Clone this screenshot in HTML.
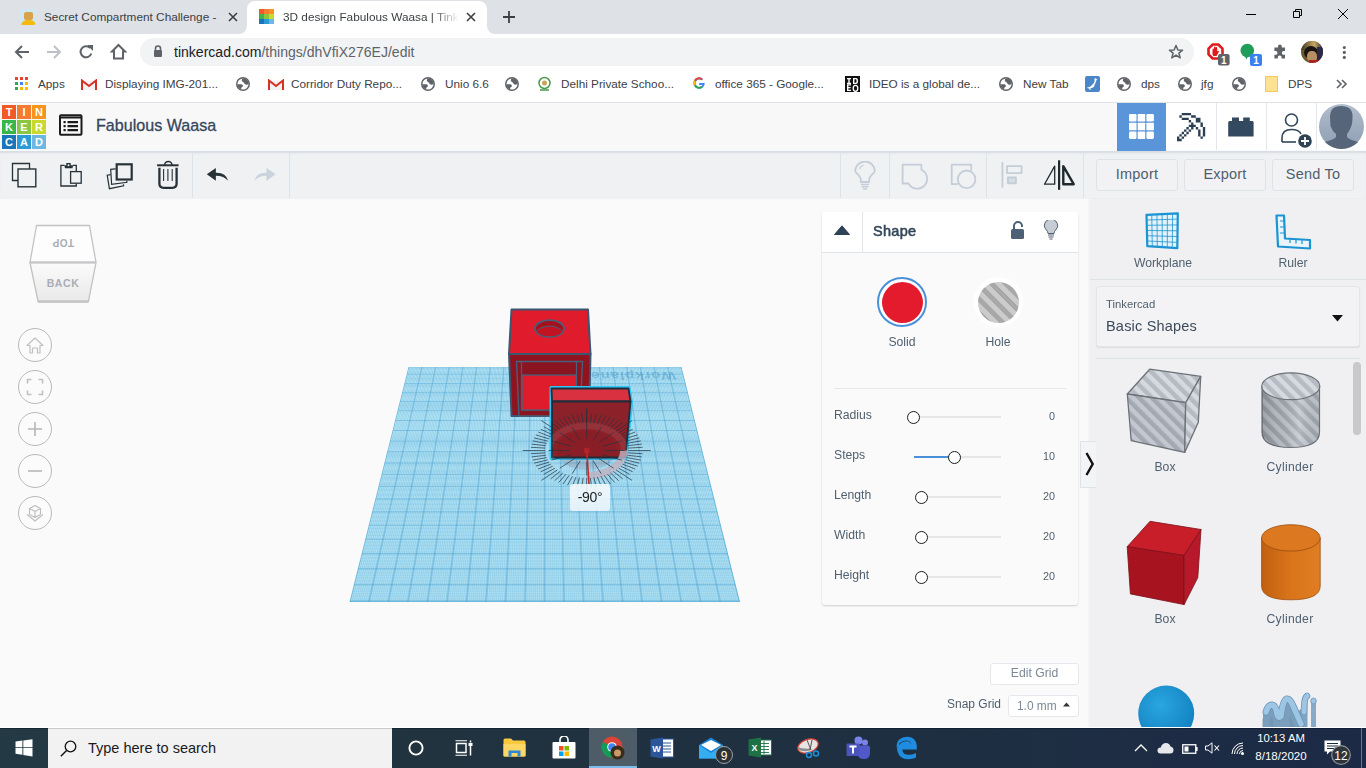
<!DOCTYPE html>
<html><head><meta charset="utf-8">
<style>
*{box-sizing:border-box;margin:0;padding:0}
html,body{width:1366px;height:768px;overflow:hidden;background:#fafafa;font-family:"Liberation Sans",sans-serif;position:relative}
.a{position:absolute}
i{display:block;font-style:normal}
#tabs{left:0;top:0;width:1366px;height:34px;background:#dee1e6}
#tb{left:0;top:34px;width:1366px;height:33px;background:#fff}
#bm{left:0;top:67px;width:1366px;height:35px;background:#fff}
.t{white-space:nowrap}
.bmt{top:77px;font-size:11.75px;color:#3c4043}


.btn{border:1px solid #dfe3e8;border-radius:3px;background:#f2f2f4;color:#4f5e6e;font-size:14.5px;line-height:29px;text-align:center;letter-spacing:0.2px}


.nv{left:18px;width:34px;height:34px;border:1px solid #b9b9b9;border-radius:50%;background:#fbfbfb}


.lbl{font-size:12.2px;color:#50606f}
.val{font-size:10.8px;color:#50606f;width:50px;text-align:right}
.trk{height:2px;background:#e6e6e6}
.thm{width:13px;height:13px;border-radius:50%;border:1.5px solid #1a1a1a;background:#fff}
</style></head><body>
<!-- TAB STRIP -->
<div id="tabs" class="a"></div>
<div class="a" style="left:239px;top:25px;width:256px;height:9px;background:#fff"></div>
<div class="a" style="left:231px;top:0;width:16px;height:34px;background:#dee1e6;border-radius:0 0 8px 0"></div>
<div class="a" style="left:487px;top:0;width:16px;height:34px;background:#dee1e6;border-radius:0 0 0 8px"></div>
<div class="a" style="left:247px;top:1px;width:240px;height:34px;background:#fff;border-radius:8px 8px 0 0"></div>
<!-- tab1 favicon -->
<div class="a" style="left:20px;top:9px;width:16px;height:16px;background:#cfe8f3;border-radius:3px;overflow:hidden">
  <div class="a" style="left:4px;top:3px;width:9px;height:8px;background:#d9a24a;border-radius:2px"></div>
  <div class="a" style="left:1px;top:11px;width:15px;height:6px;background:#f5b90f;border-radius:6px 6px 0 0"></div>
</div>
<div class="a t" style="left:44px;top:10px;font-size:11.8px;color:#3c4043;width:176px;overflow:hidden">Secret Compartment Challenge -</div>
<svg class="a" style="left:228px;top:12px" width="10" height="10"><path d="M1 1L9 9M9 1L1 9" stroke="#3c4043" stroke-width="1.6"/></svg>
<!-- tab2 favicon -->
<div class="a" style="left:259px;top:9px;width:15px;height:15px;display:grid;grid-template-columns:repeat(3,5px);grid-template-rows:repeat(3,5px)">
  <i style="background:#f05a28"></i><i style="background:#f47b30"></i><i style="background:#f7941d"></i>
  <i style="background:#3ab54a"></i><i style="background:#8cc63f"></i><i style="background:#c9d92e"></i>
  <i style="background:#1b75bb"></i><i style="background:#2d9bd6"></i><i style="background:#6cb8e2"></i>
</div>
<div class="a t" style="left:283px;top:10px;font-size:11.8px;color:#3c4043;width:176px;overflow:hidden;-webkit-mask-image:linear-gradient(90deg,#000 150px,transparent 176px)">3D design Fabulous Waasa | Tinkercad</div>
<svg class="a" style="left:466px;top:12px" width="10" height="10"><path d="M1 1L9 9M9 1L1 9" stroke="#3c4043" stroke-width="1.6"/></svg>
<svg class="a" style="left:502px;top:10px" width="14" height="14"><path d="M7 1V13M1 7H13" stroke="#3c4043" stroke-width="1.8"/></svg>
<!-- window controls -->
<div class="a" style="left:1246px;top:14px;width:10px;height:1px;background:#000"></div>
<svg class="a" style="left:1291px;top:8px" width="12" height="12"><path d="M2.5 3.5H8.5V9.5H2.5Z M4.5 3.5V1.5H10.5V7.5H8.5" fill="none" stroke="#000" stroke-width="1"/></svg>
<svg class="a" style="left:1337px;top:8px" width="12" height="12"><path d="M1 1L11 11M11 1L1 11" stroke="#000" stroke-width="1"/></svg>

<!-- TOOLBAR -->
<div id="tb" class="a"></div>
<div class="a" style="left:140px;top:38px;width:1054px;height:28px;background:#f1f3f4;border-radius:14px"></div>
<svg class="a" style="left:14px;top:44px" width="16" height="16"><path d="M15 8H2M8 2L2 8L8 14" fill="none" stroke="#5f6368" stroke-width="2"/></svg>
<svg class="a" style="left:46px;top:44px" width="16" height="16"><path d="M1 8H14M8 2L14 8L8 14" fill="none" stroke="#bdc1c6" stroke-width="2"/></svg>
<svg class="a" style="left:78px;top:44px" width="16" height="16"><path d="M13.3 9.5A5.5 5.5 0 1 1 12 4" fill="none" stroke="#5f6368" stroke-width="2"/><path d="M9 1H15V7Z" fill="#5f6368"/></svg>
<svg class="a" style="left:110px;top:43px" width="17" height="17"><path d="M8.5 2L15 8.5H13V15.5H4V8.5H2Z" fill="none" stroke="#5f6368" stroke-width="2" stroke-linejoin="miter"/></svg>
<svg class="a" style="left:153px;top:45px" width="10" height="12"><path d="M2.5 5V3.5A2.5 2.5 0 0 1 7.5 3.5V5" fill="none" stroke="#5f6368" stroke-width="1.6"/><rect x="1" y="5" width="8" height="7" rx="1" fill="#5f6368"/></svg>
<div class="a t" style="left:174px;top:44px;font-size:14.05px;color:#202124">tinkercad.com<span style="color:#5f6368">/things/dhVfiX276EJ/edit</span></div>
<svg class="a" style="left:1168px;top:44px" width="16" height="16"><path d="M8 1.5L9.9 6L14.6 6.2L10.9 9.2L12.2 13.9L8 11.2L3.8 13.9L5.1 9.2L1.4 6.2L6.1 6Z" fill="none" stroke="#5f6368" stroke-width="1.5" stroke-linejoin="round"/></svg>
<!-- extension icons -->
<svg class="a" style="left:1207px;top:43px" width="24" height="24"><path d="M5.7 1.5H11.3L15.5 5.7V11.3L11.3 15.5H5.7L1.5 11.3V5.7Z" fill="#fff" stroke="#e01b1b" stroke-width="2.6" stroke-linejoin="round"/><path d="M5.5 11.5V6.5Q5.5 5.5 6.3 5.5Q7 5.5 7 6.5V4.5Q7 3.5 7.8 3.5Q8.6 3.5 8.6 4.5V5Q8.6 4 9.4 4Q10.2 4 10.2 5V8.5Q11 7.5 11.8 8Q12.2 8.5 11.5 9.5L9.5 13H6.5Z" fill="#e01b1b"/><rect x="11" y="11" width="11.6" height="11.6" rx="2" fill="#5f6368"/><text x="16.8" y="20.7" font-size="10" font-weight="bold" fill="#fff" text-anchor="middle" font-family="Liberation Sans">1</text></svg>
<svg class="a" style="left:1240px;top:43px" width="24" height="24"><circle cx="7.3" cy="7.5" r="6.8" fill="#1e9e5a"/><path d="M4 12L6.5 16.5L8 13Z" fill="#1e9e5a"/><rect x="10" y="11" width="12" height="12" rx="2" fill="#3b82f1"/><text x="16" y="20.8" font-size="10" font-weight="bold" fill="#fff" text-anchor="middle" font-family="Liberation Sans">1</text></svg>
<svg class="a" style="left:1272px;top:44px" width="16" height="16"><path d="M6 2.3a1.9 1.9 0 0 1 3.8 0V3.5H13V7h-1.2a1.9 1.9 0 0 0 0 3.8H13V14.5H9.6v-1.2a1.9 1.9 0 0 0-3.8 0V14.5H2.4V10.8h1.2a1.9 1.9 0 0 0 0-3.8H2.4V3.5H6Z" fill="#5f6368"/></svg>
<div class="a" style="left:1301px;top:41px;width:22px;height:22px;border-radius:50%;overflow:hidden;background:#6b5a2e">
 <div class="a" style="left:0;top:0;width:22px;height:9px;background:linear-gradient(90deg,#3c3220,#c9a860 60%,#2e2a40)"></div>
 <div class="a" style="left:3px;top:5px;width:14px;height:13px;border-radius:50%;background:#1a1410"></div>
 <div class="a" style="left:6px;top:10px;width:10px;height:11px;border-radius:45%;background:#b88f63"></div>
 <div class="a" style="left:16px;top:6px;width:6px;height:16px;background:#2a2a48"></div>
 <div class="a" style="left:8px;top:19px;width:10px;height:4px;background:#b02020"></div>
</div>
<svg class="a" style="left:1342px;top:45px" width="5" height="15"><circle cx="2.3" cy="2.5" r="1.6" fill="#5f6368"/><circle cx="2.3" cy="7.4" r="1.6" fill="#5f6368"/><circle cx="2.3" cy="12.4" r="1.6" fill="#5f6368"/></svg>

<!-- BOOKMARKS -->
<div id="bm" class="a"></div>
<svg class="a" style="left:15px;top:77px" width="14" height="14"><g><rect x="0" y="0" width="3" height="3" fill="#ea4335"/><rect x="5" y="0" width="3" height="3" fill="#ea4335"/><rect x="10" y="0" width="3" height="3" fill="#ea4335"/><rect x="0" y="5" width="3" height="3" fill="#34a853"/><rect x="5" y="5" width="3" height="3" fill="#4285f4"/><rect x="10" y="5" width="3" height="3" fill="#fbbc04"/><rect x="0" y="10" width="3" height="3" fill="#34a853"/><rect x="5" y="10" width="3" height="3" fill="#fbbc04"/><rect x="10" y="10" width="3" height="3" fill="#fbbc04"/></g></svg>
<div class="a t bmt" style="left:38px">Apps</div>
<svg class="a gm" style="left:81px;top:79px" width="16" height="12"><path d="M1 1.5H15V11H1Z" fill="#f2f2f2"/><path d="M1 11V1.5L8 7L15 1.5V11" fill="none" stroke="#d93025" stroke-width="2"/></svg>
<div class="a t bmt" style="left:105px">Displaying IMG-201...</div>
<svg class="a glb" style="left:236px;top:77px" width="14" height="14"><use href="#globe"/></svg>
<svg class="a gm" style="left:268px;top:79px" width="16" height="12"><path d="M1 1.5H15V11H1Z" fill="#f2f2f2"/><path d="M1 11V1.5L8 7L15 1.5V11" fill="none" stroke="#d93025" stroke-width="2"/></svg>
<div class="a t bmt" style="left:291px">Corridor Duty Repo...</div>
<svg class="a" style="left:421px;top:77px" width="14" height="14"><use href="#globe"/></svg>
<div class="a t bmt" style="left:445px">Unio 6.6</div>
<svg class="a" style="left:505px;top:77px" width="14" height="14"><use href="#globe"/></svg>
<svg class="a" style="left:537px;top:76px" width="15" height="15"><circle cx="7.5" cy="7" r="5.5" fill="none" stroke="#4a9a4a" stroke-width="1.5"/><circle cx="7.5" cy="7" r="2.5" fill="#c9a35a"/><path d="M3 14H12" stroke="#4a9a4a" stroke-width="1.5"/></svg>
<div class="a t bmt" style="left:561px">Delhi Private Schoo...</div>
<svg class="a" style="left:692px;top:76px" width="14" height="14"><path d="M12.8 7.1H7.2V9H10.6A3.7 3.7 0 1 1 9.6 4.3L11 2.9A5.7 5.7 0 1 0 12.8 7.1Z" fill="#4285f4"/><path d="M2 4.2A5.7 5.7 0 0 1 11 2.9L9.6 4.3A3.7 3.7 0 0 0 3.7 5.2Z" fill="#ea4335"/><path d="M1.5 7A5.7 5.7 0 0 0 2 9.8L3.7 8.8A3.7 3.7 0 0 1 3.7 5.2L2 4.2A5.7 5.7 0 0 0 1.5 7Z" fill="#fbbc05"/><path d="M2 9.8A5.7 5.7 0 0 0 11 11.2L9.5 9.8A3.7 3.7 0 0 1 3.7 8.8Z" fill="#34a853"/></svg>
<div class="a t bmt" style="left:715px">office 365 - Google...</div>
<svg class="a" style="left:845px;top:76px" width="15" height="16"><rect width="15" height="16" fill="#111"/><g fill="#fff"><rect x="2" y="2" width="4" height="1.3"/><rect x="3.3" y="2" width="1.4" height="6"/><rect x="2" y="6.7" width="4" height="1.3"/><path d="M8 2H11Q13 2 13 5Q13 8 11 8H8ZM9.4 3.3V6.7H10.8Q11.6 6.7 11.6 5Q11.6 3.3 10.8 3.3Z"/><path d="M2 9H6V10.3H3.4V11.8H5.6V13H3.4V14.4H6V15.7H2Z" transform="translate(0,-0.7)"/><ellipse cx="10.5" cy="12.3" rx="2.3" ry="3" fill="none" stroke="#fff" stroke-width="1.3"/></g></svg>
<div class="a t bmt" style="left:869px">IDEO is a global de...</div>
<svg class="a" style="left:999px;top:77px" width="14" height="14"><use href="#globe"/></svg>
<div class="a t bmt" style="left:1023px">New Tab</div>
<svg class="a" style="left:1085px;top:76px" width="15" height="16"><rect width="15" height="16" rx="2" fill="#4a86c8"/><path d="M9.5 2.5Q11 2 11.5 3L12.5 3.5L11.5 4Q11 6 10 8Q9.5 11 7 12L5 12.5L6 14H5L4 12.5Q2.5 12.5 2 11.5Q5 11.5 6.5 9.5Q8 8 9.5 6Z" fill="#fff"/></svg>
<svg class="a" style="left:1117px;top:77px" width="14" height="14"><use href="#globe"/></svg>
<div class="a t bmt" style="left:1141px">dps</div>
<svg class="a" style="left:1178px;top:77px" width="14" height="14"><use href="#globe"/></svg>
<div class="a t bmt" style="left:1201px">jfg</div>
<svg class="a" style="left:1232px;top:77px" width="14" height="14"><use href="#globe"/></svg>
<svg class="a" style="left:1265px;top:76px" width="13" height="16"><path d="M0.5 0.5H12.5V15.5H0.5Z" fill="#fde293" stroke="#f2c94c" stroke-width="1"/></svg>
<div class="a t bmt" style="left:1288px">DPS</div>
<svg class="a" style="left:1336px;top:78px" width="12" height="12"><path d="M1 2L5 6L1 10M6 2L10 6L6 10" fill="none" stroke="#5f6368" stroke-width="1.6"/></svg>
<svg width="0" height="0" style="position:absolute"><defs><clipPath id="gclip"><circle cx="7" cy="7" r="5.8"/></clipPath><g id="globe"><circle cx="7" cy="7" r="6.25" fill="#fff" stroke="#5f6368" stroke-width="1.5"/><g clip-path="url(#gclip)" fill="#5f6368"><path d="M7.2 0.5Q5.3 2.6 6 4.3Q7.6 5 8.6 6.8Q10.3 8.7 13.5 6.5V0.5Z"/><path d="M0.5 7.2H5.3Q7.3 7.7 6.8 9.4Q5.3 10 5.2 11.5V13.5H0.5Z"/></g></g></defs></svg>
<!-- TINKERCAD HEADER -->
<div class="a" style="left:0;top:102px;width:1366px;height:50px;background:#f8f8f9;border-top:1px solid #dfe2e6;border-bottom:1px solid #d9dee4"></div>
<div class="a" style="left:2px;top:105px;width:44px;height:44px;display:grid;grid-template-columns:14px 14px 14px;grid-template-rows:14px 14px 14px;gap:1px;font:bold 11px/14px 'Liberation Sans',sans-serif;color:#fff;text-align:center">
  <i style="background:#f05a28">T</i><i style="background:#f47b30">I</i><i style="background:#f7941d">N</i>
  <i style="background:#3ab54a">K</i><i style="background:#8cc63f">E</i><i style="background:#c9d92e">R</i>
  <i style="background:#1b75bb">C</i><i style="background:#2d9bd6">A</i><i style="background:#6cb8e2">D</i>
</div>
<svg class="a" style="left:59px;top:114px" width="24" height="22"><rect x="1" y="1.2" width="21.5" height="19.5" rx="1" fill="none" stroke="#1c1c1c" stroke-width="2"/><path d="M1 3.5H22.5" stroke="#1c1c1c" stroke-width="2"/><rect x="4.5" y="7" width="2.2" height="2.2" fill="#1c1c1c"/><rect x="4.5" y="11" width="2.2" height="2.2" fill="#1c1c1c"/><rect x="4.5" y="15" width="2.2" height="2.2" fill="#1c1c1c"/><path d="M8.5 8.1H19M8.5 12.1H19M8.5 16.1H19" stroke="#1c1c1c" stroke-width="2.2"/></svg>
<div class="a t" style="left:96px;top:116px;font-size:16.1px;color:#34475b;-webkit-text-stroke:0.3px #34475b">Fabulous Waasa</div>
<!-- header right buttons -->
<div class="a" style="left:1166px;top:103px;width:200px;height:47px;background:#fff"></div>
<div class="a" style="left:1117px;top:103px;width:49px;height:48px;background:#5b95d9"></div>
<svg class="a" style="left:1129px;top:114px" width="25" height="25"><g fill="#fff"><rect x="0" y="0" width="7.5" height="7.5" rx="1.3"/><rect x="8.7" y="0" width="7.5" height="7.5" rx="0.5"/><rect x="17.4" y="0" width="7.5" height="7.5" rx="1.3"/><rect x="0" y="8.7" width="7.5" height="7.5" rx="0.5"/><rect x="8.7" y="8.7" width="7.5" height="7.5" rx="0.5"/><rect x="17.4" y="8.7" width="7.5" height="7.5" rx="0.5"/><rect x="0" y="17.4" width="7.5" height="7.5" rx="1.3"/><rect x="8.7" y="17.4" width="7.5" height="7.5" rx="0.5"/><rect x="17.4" y="17.4" width="7.5" height="7.5" rx="1.3"/></g></svg>
<div class="a" style="left:1216px;top:103px;width:1px;height:47px;background:#e3e7eb"></div>
<div class="a" style="left:1266px;top:103px;width:1px;height:47px;background:#e3e7eb"></div>
<div class="a" style="left:1316px;top:103px;width:1px;height:47px;background:#e3e7eb"></div>
<svg class="a" style="left:1177.3px;top:112.5px" width="30" height="30"><path transform="scale(2.35)" d="M2 0h1v1h-1zM3 0h1v1h-1zM4 0h1v1h-1zM5 0h1v1h-1zM1 1h1v1h-1zM6 1h1v1h-1zM7 1h1v1h-1zM2 2h1v1h-1zM3 2h1v1h-1zM4 2h1v1h-1zM8 2h1v1h-1zM9 2h1v1h-1zM8 3h1v1h-1zM9 3h1v1h-1zM5 3h1v1h-1zM6 4h1v1h-1zM10 4h1v1h-1zM10 5h1v1h-1zM5 5h1v1h-1zM6 5h1v1h-1zM7 5h1v1h-1zM4 6h1v1h-1zM6 6h1v1h-1zM8 6h1v1h-1zM11 6h1v1h-1zM11 7h1v1h-1zM11 8h1v1h-1zM11 9h1v1h-1zM3 7h1v1h-1zM5 7h1v1h-1zM9 7h1v1h-1zM9 8h1v1h-1zM9 9h1v1h-1zM2 8h1v1h-1zM4 8h1v1h-1zM1 9h1v1h-1zM3 9h1v1h-1zM0 10h1v1h-1zM0 11h1v1h-1zM2 10h1v1h-1zM10 10h1v1h-1zM1 11h1v1h-1z" fill="#2b3e52"/></svg>
<svg class="a" style="left:1228px;top:117px" width="26" height="20"><path d="M4 0.4H11V4H15.2V0.4H21.8V4H24.5Q25.6 4 25.6 5.5V19.4H0.2V5.5Q0.2 4 1.5 4H4Z" fill="#33495f"/></svg>
<svg class="a" style="left:1279px;top:111px" width="36" height="38"><circle cx="12.5" cy="9" r="6" fill="none" stroke="#34475b" stroke-width="1.6"/><path d="M3 31V27Q3 18.5 12.5 18.5Q20 18.5 22 23" fill="none" stroke="#34475b" stroke-width="1.6"/><path d="M3 31H17" stroke="#34475b" stroke-width="1.6"/><circle cx="26" cy="30" r="6.8" fill="#2f4357"/><path d="M26 26V34M22 30H30" stroke="#fff" stroke-width="1.8"/></svg>
<svg class="a" style="left:1319px;top:104px" width="45" height="45"><defs><linearGradient id="avg" x1="0" y1="0" x2="0" y2="1"><stop offset="0" stop-color="#b2bdcd"/><stop offset="1" stop-color="#8e9db3"/></linearGradient><clipPath id="avc"><circle cx="22.5" cy="22.5" r="22.5"/></clipPath></defs><circle cx="22.5" cy="22.5" r="22.5" fill="url(#avg)"/><g clip-path="url(#avc)" fill="#56657a"><path d="M11 13Q11 2 22 2Q34 2 33.5 13Q33.5 20 32 23Q30 28 28 30V33Q30 35.5 36 37Q44 39 46 46H-1Q1 39 9 37Q15 35.5 17 33V30Q13 27 11.5 22Z"/></g></svg>

<!-- TOOLBAR -->
<div class="a" style="left:0;top:152px;width:1366px;height:48px;background:#f0f1f3;border-bottom:1px solid #e3e5e8;box-shadow:inset 0 2px 2px -1px #d5dbe1"></div>
<div class="a" style="left:192px;top:152px;width:1px;height:46px;background:#dde3ea"></div>
<div class="a" style="left:289px;top:152px;width:1px;height:46px;background:#dde3ea"></div>
<div class="a" style="left:840px;top:152px;width:1px;height:46px;background:#dde3ea"></div>
<div class="a" style="left:889px;top:152px;width:1px;height:46px;background:#dde3ea"></div>
<div class="a" style="left:986px;top:152px;width:1px;height:46px;background:#dde3ea"></div>
<div class="a" style="left:1083px;top:152px;width:1px;height:46px;background:#dde3ea"></div>
<svg class="a" style="left:11px;top:162px" width="27" height="27"><path d="M7 18.5H1.5V1.5H18.5V7" fill="none" stroke="#263238" stroke-width="1.3"/><rect x="7" y="7" width="17.8" height="17.8" fill="none" stroke="#263238" stroke-width="1.4"/></svg>



<svg class="a" style="left:0;top:152px" width="190" height="47" viewBox="0 152 190 47">
<g fill="none" stroke="#263238">
<path d="M64.5 165.4H60.9V186H76.3V183.5M73 165.4H76.3V171" stroke-width="1.3"/>
<rect x="70.6" y="171.6" width="10.6" height="11.6" stroke-width="1.3" fill="#f0f1f3"/>
<rect x="116.7" y="164.3" width="15" height="15.2" stroke-width="2.2"/>
<path d="M115.6 168.8L110.7 169.4L111.6 184.3L126.9 182.3L126.7 180.6" stroke-width="1.2"/>
<path d="M110.6 174.6L107.2 175.2L109.4 188.7L123.6 185.8L123.4 184.2" stroke-width="1.2"/>
<path d="M157.1 165.3H178.6" stroke-width="2"/>
<path d="M164.6 165A3.7 3.5 0 0 1 172 165" stroke-width="1.6"/>
<path d="M159.4 167.8V183.5Q159.4 187.8 163.6 187.8H172.4Q176.6 187.8 176.6 183.5V167.8" stroke-width="2.3"/>
<path d="M163.6 169V181M167.9 169V181M172.2 169V181" stroke-width="1.1"/>
</g>
<path d="M66.3 163H70.7V165.3H73.2L72.5 168.3H65L64.3 165.3H66.3Z" fill="#263238"/>
<circle cx="68.5" cy="165.3" r="1" fill="#f0f1f3"/>
</svg>


<svg class="a" style="left:200px;top:160px" width="90" height="30" viewBox="200 160 90 30"><path d="M206.8 174.2L215.85 168V172.7Q226 172.3 228.15 180.75Q224 175.8 215.85 175.65V180.75Z" fill="#263238"/><path d="M275.6 174.2L266.55 168V172.7Q256.4 172.3 254.25 180.75Q258.4 175.8 266.55 175.65V180.75Z" fill="#c8d3dd"/></svg>
<!-- right toolbar icons (disabled) -->
<svg class="a" style="left:854px;top:161px" width="22" height="30"><path d="M6.8 21V18.5Q6.8 16.5 4.3 13.8Q1.2 10.8 1.2 10.3A9.8 9.8 0 1 1 20.8 10.3Q20.8 10.8 17.7 13.8Q15.2 16.5 15.2 18.5V21Z" fill="none" stroke="#c4ced8" stroke-width="1.8" stroke-linejoin="round"/><path d="M7 23.5H15M7.5 25.8H14.5M9 28H13" stroke="#c4ced8" stroke-width="1.5"/><path d="M5.5 8Q6.5 5 9.5 4.2" fill="none" stroke="#c4ced8" stroke-width="1.2"/></svg>




<svg class="a" style="left:895px;top:155px" width="185" height="40" viewBox="895 155 185 40">
<g fill="none" stroke="#c4ced8" stroke-width="1.8" stroke-linejoin="round">
<path d="M902.6 164.7H921.4V169.8A9.9 9.9 0 1 1 908.5 183.5H902.6Z"/>
<path d="M958 184.2H951.7V164.7H971.2V170.5"/>
<circle cx="966.6" cy="179.3" r="8.8"/>
<path d="M1002.4 162V187.7"/>
<rect x="1007" y="166.1" width="14.6" height="7"/>
<rect x="1007.9" y="177.5" width="8" height="5.8" fill="#d5dde5"/>
</g>
<path d="M1059.1 160.3V189.8" stroke="#1e2a30" stroke-width="2.2"/>
<path d="M1054.7 166.1L1044.5 184.2H1054.7Z" fill="none" stroke="#1e2a30" stroke-width="1.3" stroke-linejoin="round"/>
<path d="M1063.3 166.1L1073.7 184.2H1063.3Z" fill="none" stroke="#1e2a30" stroke-width="2.4" stroke-linejoin="round"/>
</svg>
<!-- buttons -->
<div class="a btn" style="left:1096px;top:159px;width:82px;height:32px">Import</div>
<div class="a btn" style="left:1184px;top:159px;width:82px;height:32px">Export</div>
<div class="a btn" style="left:1272px;top:159px;width:82px;height:32px">Send To</div>
<!-- MAIN -->
<div class="a" style="left:0;top:199px;width:1090px;height:529px;background:#fafafa"></div>
<!-- view cube -->
<svg class="a" style="left:28px;top:223px" width="72" height="82">
  <defs><linearGradient id="cg" x1="0" y1="0" x2="0" y2="1"><stop offset="0" stop-color="#fbfbfb"/><stop offset="1" stop-color="#e9e9ea"/></linearGradient></defs>
  <path d="M8.5 2.5H61.5L68 39.5L60.5 78.5H10L2 39.5Z" fill="#c9c9cb" transform="translate(0,1.5)"/>
  <path d="M8.5 2.5H61.5L68 39.5H2Z" fill="#fdfdfd" stroke="#c3c3c5" stroke-width="1.3" stroke-linejoin="round"/>
  <path d="M2 39.5H68L60.5 78H10Z" fill="url(#cg)" stroke="#c3c3c5" stroke-width="1.3" stroke-linejoin="round"/>
  <path d="M2 39.5H68" stroke="#c6c6c8" stroke-width="2"/>
  <text x="35" y="64" font-family="Liberation Sans" font-weight="bold" font-size="10.5" fill="#a9adb5" text-anchor="middle" letter-spacing="0.6">BACK</text>
  <text x="35" y="23" font-family="Liberation Sans" font-weight="bold" font-size="10" fill="#a9adb5" text-anchor="middle" letter-spacing="0.5" transform="rotate(180 35 19.5)">TOP</text>
</svg>
<!-- nav circles -->
<div class="a nv" style="top:328px"></div>
<div class="a nv" style="top:370px"></div>
<div class="a nv" style="top:412px"></div>
<div class="a nv" style="top:454px"></div>
<div class="a nv" style="top:496px"></div>
<svg class="a" style="left:18px;top:328px" width="34" height="34"><path d="M17 10L25 17.5H22V25H19.5V20H14.5V25H12V17.5H9Z" fill="none" stroke="#c0c0c0" stroke-width="1.2" stroke-linejoin="round"/></svg>
<svg class="a" style="left:18px;top:370px" width="34" height="34"><path d="M9.5 13.5V9.5H13.5M20.5 9.5H24.5V13.5M24.5 20.5V24.5H20.5M13.5 24.5H9.5V20.5" fill="none" stroke="#c0c0c0" stroke-width="1.6"/></svg>
<svg class="a" style="left:18px;top:412px" width="34" height="34"><path d="M17 10V24M10 17H24" stroke="#b7b7b7" stroke-width="1.6"/></svg>
<svg class="a" style="left:18px;top:454px" width="34" height="34"><path d="M10 17H24" stroke="#b7b7b7" stroke-width="1.6"/></svg>
<svg class="a" style="left:18px;top:496px" width="34" height="34"><path d="M17 9.5L22.5 12.5V18.5L17 21.5L11.5 18.5V12.5Z M11.5 12.5L17 15.5L22.5 12.5 M17 15.5V21.5" fill="none" stroke="#bdbdbd" stroke-width="1.1" stroke-linejoin="round"/><path d="M9 18.5L17 25L25 18.5" fill="none" stroke="#bdbdbd" stroke-width="1.1"/></svg>
<!-- WORKPLANE -->
<div class="a" style="left:0;top:0;width:400px;height:400px;transform-origin:0 0;transform:matrix3d(0.6825,0,0,0,-0.41040813,0.13465109,0,-0.00075224072,0,0,1,0,408.5,367,0,1);
background-color:#afe1f3;
background-image:
 linear-gradient(90deg,rgba(45,140,195,0.55) 0 1.4px,transparent 1.4px),
 linear-gradient(0deg,rgba(45,140,195,0.5) 0 1.4px,transparent 1.4px),
 linear-gradient(90deg,rgba(60,150,205,0.16) 0 0.7px,transparent 0.7px),
 linear-gradient(0deg,rgba(60,150,205,0.12) 0 0.7px,transparent 0.7px);
background-size:20px 20px,20px 20px,2px 2px,2px 2px;background-position:-0.7px -0.7px,-0.7px -0.7px,0 0,0 0;
box-shadow:inset 0 0 0 1px rgba(80,170,215,0.5)"></div>

<div class="a" style="left:0;top:0;width:400px;height:400px;transform-origin:0 0;transform:matrix3d(0.6825,0,0,0,-0.41040813,0.13465109,0,-0.00075224072,0,0,1,0,408.5,367,0,1)">
<div class="a t" style="left:252px;top:9px;width:150px;text-align:center;font:bold 22px/22px 'Liberation Sans',sans-serif;color:rgba(60,140,190,0.42);transform:rotate(180deg) scaleY(1.15);letter-spacing:1.2px">Workplane</div></div>
<!-- 3D objects -->
<svg class="a" style="left:0;top:0" width="1090" height="728" viewBox="0 0 1090 728">
  <!-- back box with hole -->
  <path d="M509 354L511.5 309.5H588L590.5 354Z" fill="#e01b2c" stroke="#3b5670" stroke-width="2" stroke-linejoin="round"/>
  <path d="M509 354H590.5L589 416H511.5Z" fill="#8f1420" stroke="#3b5670" stroke-width="2" stroke-linejoin="round"/>
  <!-- hole -->
  <ellipse cx="549.5" cy="328.5" rx="14.5" ry="8.3" fill="#a5101c" stroke="#45607a" stroke-width="1.8"/>
  <path d="M536 331.5Q549.5 321 563 331.5" fill="none" stroke="#45607a" stroke-width="1.3"/>
  <path d="M536.2 331Q549.5 322 562.8 331A14 7.8 0 0 1 536.2 331Z" fill="#c11422"/>
  <!-- compartment -->
  <path d="M516.5 361.5H582.5L580 416H519Z" fill="#8a1420" stroke="#45607a" stroke-width="1.4"/>
  <path d="M521.5 362V410H576.5V362" fill="none" stroke="#45607a" stroke-width="1.3"/>
  <rect x="522" y="375" width="54" height="35" fill="#df1c2c" stroke="#45607a" stroke-width="1.3"/>
  <!-- front selected box -->
  <path d="M551 387.5H629L631.5 402.5L626 458.5H551Z" fill="none" stroke="#2bc8f5" stroke-width="3" stroke-linejoin="round"/>
  <path d="M552 401.5L551.5 388.5H628.5L630.5 401.5Z" fill="#d9313f" stroke="#1f2d3d" stroke-width="1.8" stroke-linejoin="round"/>
  <path d="M552 401.5H630.5L625.5 457.5H552Z" fill="#8c2129" stroke="#1f2d3d" stroke-width="1.8" stroke-linejoin="round"/>
</svg>
<svg class="a" style="left:0;top:0" width="1090" height="728" viewBox="0 0 1090 728">
<ellipse cx="586.7" cy="450.5" rx="38" ry="25" fill="none" stroke="rgba(255,255,255,0.08)" stroke-width="7"/>
<ellipse cx="586.7" cy="450.5" rx="30" ry="19.5" fill="rgba(120,10,20,0.12)"/>
<path d="M627.7 450.5A41 29 0 0 1 586.7 479.5L586.7 472.0A33.5 21.5 0 0 0 620.2 450.5Z" fill="rgba(190,178,192,0.8)"/>
<path d="M628.2 450.5L650.7 450.5M628.0 452.9L642.5 453.7M627.6 455.3L641.8 456.9M626.8 457.6L640.8 460.1M625.7 459.9L639.3 463.1M624.3 462.1L637.5 466.1M622.6 464.2L635.2 469.0M620.7 466.2L632.6 471.7M618.5 468.1L629.6 474.3M616.0 469.9L632.0 480.4M613.4 471.5L622.7 478.8M610.5 472.9L618.8 480.8M607.5 474.2L614.7 482.5M604.2 475.3L610.4 484.0M600.9 476.2L605.9 485.2M597.4 477.0L601.2 486.2M593.9 477.5L596.4 486.9M590.3 477.8L591.6 487.3M586.7 477.9L586.7 492.7M583.1 477.8L581.8 487.3M579.5 477.5L577.0 486.9M576.0 477.0L572.2 486.2M572.5 476.2L567.5 485.2M569.2 475.3L563.0 484.0M566.0 474.2L558.7 482.5M562.9 472.9L554.6 480.8M560.0 471.5L550.7 478.8M557.4 469.9L541.4 480.4M554.9 468.1L543.8 474.3M552.7 466.2L540.8 471.7M550.8 464.2L538.2 469.0M549.1 462.1L535.9 466.1M547.7 459.9L534.1 463.1M546.6 457.6L532.6 460.1M545.8 455.3L531.6 456.9M545.4 452.9L530.9 453.7M545.2 450.5L522.7 450.5M545.4 448.1L530.9 447.3M545.8 445.7L531.6 444.1M546.6 443.4L532.6 440.9M547.7 441.1L534.1 437.9M549.1 438.9L535.9 434.9M550.8 436.8L538.2 432.0M552.7 434.8L540.8 429.3M554.9 432.9L543.8 426.7M557.4 431.1L541.4 420.6M560.0 429.5L550.7 422.2M562.9 428.1L554.6 420.2M566.0 426.8L558.7 418.5M569.2 425.7L563.0 417.0M572.5 424.8L567.5 415.8M576.0 424.0L572.2 414.8M579.5 423.5L577.0 414.1M583.1 423.2L581.8 413.7M586.7 423.1L586.7 408.3M590.3 423.2L591.6 413.7M593.9 423.5L596.4 414.1M597.4 424.0L601.2 414.8M600.9 424.8L605.9 415.8M604.2 425.7L610.4 417.0M607.5 426.8L614.7 418.5M610.5 428.1L618.8 420.2M613.4 429.5L622.7 422.2M616.0 431.1L632.0 420.6M618.5 432.9L629.6 426.7M620.7 434.8L632.6 429.3M622.6 436.8L635.2 432.0M624.3 438.9L637.5 434.9M625.7 441.1L639.3 437.9M626.8 443.4L640.8 440.9M627.6 445.7L641.8 444.1M628.0 448.1L642.5 447.3" stroke="#26323c" stroke-opacity="0.7" stroke-width="1"/>
<path d="M603.7 450.5L624.7 450.5M602.4 454.8L621.8 460.1M598.7 458.4L613.6 468.2M593.2 460.9L601.2 473.7M586.7 461.7L586.7 475.6M580.2 460.9L572.2 473.7M574.7 458.4L559.8 468.2M571.0 454.8L551.6 460.1M569.7 450.5L548.7 450.5M571.0 446.2L551.6 440.9M574.7 442.6L559.8 432.8M580.2 440.1L572.2 427.3M586.7 438.6L586.7 409.6M593.2 440.1L601.2 427.3M598.7 442.6L613.6 432.8M602.4 446.2L621.8 440.9" stroke="#26323c" stroke-opacity="0.7" stroke-width="1"/>
<path d="M586.7 450.5L589 484" stroke="#c22a2e" stroke-width="1.6"/>
<circle cx="586.7" cy="450.5" r="3" fill="#b9252b" opacity="0.8"/>
</svg><div class="a" style="left:570px;top:484px;width:40px;height:27px;background:linear-gradient(180deg,rgba(250,252,253,0.85),rgba(232,244,250,0.92));border-radius:3px;font-size:14px;line-height:27px;text-align:center;color:#222;letter-spacing:-0.3px">-90°</div>
<!-- SHAPE PANEL -->
<div class="a" style="left:822px;top:212px;width:256px;height:393px;background:#fafafa;border-radius:3px;box-shadow:0 1px 2px rgba(0,0,0,0.18)"></div>
<div class="a" style="left:822px;top:212px;width:256px;height:41px;background:#fff;border-radius:3px 3px 0 0;border-bottom:1px solid #dde2e8"></div>
<div class="a" style="left:862px;top:212px;width:1px;height:40px;background:#e3e7eb"></div>
<svg class="a" style="left:834px;top:225px" width="16" height="10"><path d="M0.5 9.5L8 0.8L15.5 9.5Z" fill="#2f4357" stroke="#2f4357" stroke-linejoin="round"/></svg>
<div class="a t" style="left:873px;top:223px;font:14.5px 'Liberation Sans',sans-serif;color:#33475b;-webkit-text-stroke:0.55px #33475b;letter-spacing:0.3px">Shape</div>
<svg class="a" style="left:1010px;top:221px" width="15" height="19"><path d="M4 8V5A4 4 0 0 1 12 5V6" fill="none" stroke="#4d6075" stroke-width="2"/><rect x="1" y="8" width="13" height="10" rx="1.5" fill="#4d6075"/></svg>
<svg class="a" style="left:1043px;top:220px" width="16" height="20"><path d="M5 13.5Q5 11.5 3 9.5Q1.3 7.5 1.3 5.8A6.7 6.7 0 0 1 14.7 5.8Q14.7 7.5 13 9.5Q11 11.5 11 13.5Z" fill="#c6ccd3" stroke="#4f5e6d" stroke-width="1"/><path d="M5 15H11M5.5 17H10.5M6.5 19H9.5" stroke="#4f5e6d" stroke-width="1"/></svg>
<!-- solid / hole -->
<div class="a" style="left:877px;top:277px;width:50px;height:50px;border-radius:50%;border:2px solid #4a90d9;background:#fff"></div>
<div class="a" style="left:881.5px;top:281.5px;width:41px;height:41px;border-radius:50%;background:#e31b2d"></div>
<div class="a" style="left:973px;top:277px;width:50px;height:50px;border-radius:50%;background:#fff"></div>
<div class="a" style="left:977.5px;top:281.5px;width:41px;height:41px;border-radius:50%;background:repeating-linear-gradient(45deg,#cbcbcb 0 5px,#a8a8a8 5px 10px)"></div>
<div class="a t lbl" style="left:852px;top:335px;width:100px;text-align:center">Solid</div>
<div class="a t lbl" style="left:948px;top:335px;width:100px;text-align:center">Hole</div>
<div class="a" style="left:834px;top:388px;width:232px;height:1px;background:#e6e8eb"></div>
<!-- sliders -->
<div class="a t lbl" style="left:834px;top:408px">Radius</div>
<div class="a trk" style="left:912px;top:415.5px;width:89px"></div>
<div class="a thm" style="left:906.5px;top:410.5px"></div>
<div class="a t val" style="left:1005px;top:410px">0</div>
<div class="a t lbl" style="left:834px;top:448px">Steps</div>
<div class="a trk" style="left:914px;top:455.5px;width:87px"></div>
<div class="a" style="left:914px;top:455.5px;width:40px;height:2px;background:#4a90d9"></div>
<div class="a thm" style="left:947.5px;top:450.5px"></div>
<div class="a t val" style="left:1005px;top:450px">10</div>
<div class="a t lbl" style="left:834px;top:488px">Length</div>
<div class="a trk" style="left:920px;top:495.5px;width:81px"></div>
<div class="a thm" style="left:914.5px;top:490.5px"></div>
<div class="a t val" style="left:1005px;top:490px">20</div>
<div class="a t lbl" style="left:834px;top:528px">Width</div>
<div class="a trk" style="left:920px;top:535.5px;width:81px"></div>
<div class="a thm" style="left:914.5px;top:530.5px"></div>
<div class="a t val" style="left:1005px;top:530px">20</div>
<div class="a t lbl" style="left:834px;top:568px">Height</div>
<div class="a trk" style="left:920px;top:575.5px;width:81px"></div>
<div class="a thm" style="left:914.5px;top:570.5px"></div>
<div class="a t val" style="left:1005px;top:570px">20</div>
<!-- edit grid -->
<div class="a" style="left:990px;top:663px;width:89px;height:22px;border:1px solid #e4e7eb;border-radius:3px;background:#fff"></div>
<div class="a t" style="left:990px;top:666px;width:89px;text-align:center;font-size:12.2px;color:#7c8895">Edit Grid</div>
<div class="a t" style="left:947px;top:697px;font-size:12px;color:#4f5e6d">Snap Grid</div>
<div class="a" style="left:1008px;top:695px;width:71px;height:22px;border:1px solid #e4e7eb;border-radius:3px;background:#fff"></div>
<div class="a t" style="left:1017px;top:699px;font-size:11.9px;color:#7c8895">1.0 mm</div>
<svg class="a" style="left:1063px;top:702px" width="7" height="5"><path d="M0 4.5L3.5 0.5L7 4.5Z" fill="#333"/></svg>
<!-- SIDEBAR -->
<div class="a" style="left:1090px;top:199px;width:276px;height:529px;background:#f0f0f3;box-shadow:-1px 0 2px rgba(0,0,0,0.05)"></div>
<svg class="a" style="left:1145px;top:212px" width="35" height="38"><path d="M1.5 2.8L32.8 1.3L32.3 36.2L2.3 34.2Z" fill="#e3f1f9" stroke="#1a94d2" stroke-width="2.2" stroke-linejoin="round"/><path d="M6.72 2.55L7.30 34.53M1.63 8.03L32.72 7.12M11.93 2.30L12.30 34.87M1.77 13.27L32.63 12.93M17.15 2.05L17.30 35.20M1.90 18.50L32.55 18.75M22.37 1.80L22.30 35.53M2.03 23.73L32.47 24.57M27.58 1.55L27.30 35.87M2.17 28.97L32.38 30.38" stroke="#1a94d2" stroke-width="0.8"/></svg>
<svg class="a" style="left:1275px;top:214px" width="37" height="36"><path d="M1.5 1.5H9L10 24.5L35 26V34.5L3 32.5Z" fill="#eaf5fb" stroke="#1a94d2" stroke-width="2.2" stroke-linejoin="round"/><path d="M5 7H9M5 13H9M5 19H9M15 29V25.5M21 29.5V25.8M27 30V26.2" stroke="#1a94d2" stroke-width="1.2"/></svg>
<div class="a t lbl" style="left:1113px;top:256px;width:100px;text-align:center">Workplane</div>
<div class="a t lbl" style="left:1243px;top:256px;width:100px;text-align:center">Ruler</div>
<div class="a" style="left:1090px;top:279px;width:276px;height:1px;background:#dde2e7"></div>
<div class="a" style="left:1096px;top:286px;width:264px;height:61px;background:#f3f3f5;border:1px solid #e2e5e9;border-radius:3px;box-shadow:0 1px 1px rgba(0,0,0,0.08)"></div>
<div class="a t" style="left:1106px;top:298px;font-size:11.3px;color:#4f5e6d">Tinkercad</div>
<div class="a t" style="left:1106px;top:318px;font-size:14.5px;color:#3c4a5a;letter-spacing:0.2px">Basic Shapes</div>
<svg class="a" style="left:1332px;top:315px" width="11" height="7"><path d="M0 0H11L5.5 6.5Z" fill="#111"/></svg>
<div class="a" style="left:1096px;top:358px;width:264px;height:1px;background:#dde2e7"></div>
<div class="a" style="left:1353px;top:362px;width:8px;height:73px;background:#c9c9cb;border-radius:4px"></div>
<!-- shape thumbnails -->
<svg class="a" style="left:1100px;top:360px" width="250" height="368" viewBox="1100 360 250 368">
  <defs>
    <pattern id="str" patternUnits="userSpaceOnUse" width="9" height="9" patternTransform="rotate(-45)"><rect width="9" height="9" fill="#c3c8d0"/><rect width="4.5" height="9" fill="#a3a9b2"/></pattern>
    <pattern id="str2" patternUnits="userSpaceOnUse" width="9" height="9" patternTransform="rotate(-45)"><rect width="9" height="9" fill="#d5d9e0"/><rect width="4.5" height="9" fill="#b5bac3"/></pattern>
    <linearGradient id="cylg" x1="0" x2="1"><stop offset="0" stop-color="#000" stop-opacity="0.18"/><stop offset="0.25" stop-color="#000" stop-opacity="0.08"/><stop offset="0.65" stop-color="#fff" stop-opacity="0.15"/><stop offset="1" stop-color="#000" stop-opacity="0.05"/></linearGradient>
    <linearGradient id="cylo" x1="0" x2="1"><stop offset="0" stop-color="#c0600f"/><stop offset="0.5" stop-color="#d9741a"/><stop offset="1" stop-color="#e07d22"/></linearGradient>
    <radialGradient id="sph" cx="0.4" cy="0.35" r="0.7"><stop offset="0" stop-color="#2aa6e0"/><stop offset="1" stop-color="#1180bf"/></radialGradient>
  </defs>
  <!-- hole box -->
  <path d="M1127.3 394L1149.7 369.2L1200.7 376.4L1185.7 402.7Z" fill="url(#str2)" stroke="#6d7278" stroke-width="1.3" stroke-linejoin="round"/>
  <path d="M1127.3 394L1185.7 402.7L1184.7 452.4L1131.2 440.7Z" fill="url(#str)" stroke="#6d7278" stroke-width="1.3" stroke-linejoin="round"/>
  <path d="M1185.7 402.7L1200.7 376.4L1198.3 422.2L1184.7 452.4Z" fill="url(#str2)" stroke="#6d7278" stroke-width="1.3" stroke-linejoin="round"/>
  <!-- hole cylinder -->
  <path d="M1262 386V432Q1262 447.5 1290.8 447.5Q1319.5 447.5 1319.5 432V386Z" fill="url(#str)" stroke="#6d7278" stroke-width="1.2"/>
  <path d="M1262 386V432Q1262 447.5 1290.8 447.5Q1319.5 447.5 1319.5 432V386Z" fill="url(#cylg)"/>
  <ellipse cx="1290.8" cy="386.2" rx="29" ry="13.4" fill="url(#str2)" stroke="#6d7278" stroke-width="1.2"/>
  <!-- red box -->
  <path d="M1127.2 546.7L1150 521.3L1201 529.5L1184.1 555.5Z" fill="#c81e2a" stroke="#7a0f18" stroke-width="0.8" stroke-linejoin="round"/>
  <path d="M1127.2 546.7L1184.1 555.5L1184.1 604.6L1130.4 593.9Z" fill="#a7141f" stroke="#7a0f18" stroke-width="0.8" stroke-linejoin="round"/>
  <path d="M1184.1 555.5L1201 529.5L1197.8 577.6L1184.1 604.6Z" fill="#b8192a" stroke="#7a0f18" stroke-width="0.8" stroke-linejoin="round"/>
  <!-- orange cylinder -->
  <path d="M1261.6 538V586Q1261.6 599.8 1290.9 599.8Q1320.2 599.8 1320.2 586V538Z" fill="url(#cylo)" stroke="#9a4c0c" stroke-width="0.8"/>
  <ellipse cx="1290.9" cy="537.9" rx="29.3" ry="13.2" fill="#dc7820" stroke="#9a4c0c" stroke-width="0.8"/>
  <!-- sphere -->
  <circle cx="1166.2" cy="713.5" r="28" fill="url(#sph)"/>
  <!-- text shape -->
  <path d="M1263 728V712L1272 708L1281 718L1287 704L1308 728Z" fill="#7596b3"/>
  <g fill="none" stroke-linecap="round" stroke-linejoin="round">
    <path d="M1266 740V712Q1268 705 1272 705Q1276 706 1276.5 712Q1278 720 1281 716Q1283 700 1286.5 699Q1290 698.5 1293 706L1302 726" stroke="#7a9fbd" stroke-width="7" transform="translate(0,8)"/>
    <path d="M1266 728V712M1276.5 728V712M1286.5 728V700M1302 728V712" stroke="#7a9fbd" stroke-width="6"/>
    <path d="M1304.5 728V704Q1304.5 697 1307 696" stroke="#7fa5c3" stroke-width="6"/>
    <path d="M1313.5 728V702" stroke="#86aac8" stroke-width="5"/>
    <path d="M1266 712Q1268 705 1272 705Q1276 706 1276.5 712Q1278 720 1281 716Q1283 700 1286.5 699Q1290 698.5 1293 706L1301 724" stroke="#6f94b4" stroke-width="7"/>
    <path d="M1266 712Q1268 705 1272 705Q1276 706 1276.5 712Q1278 720 1281 716Q1283 700 1286.5 699Q1290 698.5 1293 706L1301 724" stroke="#9dc6e4" stroke-width="5.5"/>
    <path d="M1304 712Q1304 698 1307 696" stroke="#6f94b4" stroke-width="6.5"/>
    <path d="M1304 712Q1304 698 1307 696" stroke="#9dc6e4" stroke-width="5"/>
  </g>
  <ellipse cx="1313.5" cy="701" rx="2.8" ry="3" fill="#9dc6e4" stroke="#6f94b4" stroke-width="0.8"/>
</svg>
<div class="a t lbl" style="left:1115px;top:460px;width:100px;text-align:center">Box</div>
<div class="a t lbl" style="left:1240px;top:460px;width:100px;text-align:center;letter-spacing:0.3px">Cylinder</div>
<div class="a t lbl" style="left:1115px;top:612px;width:100px;text-align:center">Box</div>
<div class="a t lbl" style="left:1240px;top:612px;width:100px;text-align:center;letter-spacing:0.3px">Cylinder</div>
<!-- collapse tab -->
<div class="a" style="left:1080px;top:441px;width:16px;height:47px;background:#f3f4f6;border:1px solid #dfe3e8;border-right:none"></div>
<svg class="a" style="left:1084px;top:451px" width="12" height="26"><path d="M2.5 2L8.7 13L2.5 24" fill="none" stroke="#111" stroke-width="2.4"/></svg>
<!-- TASKBAR -->
<div class="a" style="left:0;top:727px;width:1366px;height:1px;background:#fff"></div>
<div class="a" style="left:0;top:728px;width:1366px;height:40px;background:linear-gradient(90deg,#233a44 0,#20333f 450px,#1e2e42 1000px,#1c2a46 1366px)"></div>
<div class="a" style="left:0;top:728px;width:1366px;height:1px;background:rgba(5,15,30,0.45)"></div>
<svg class="a" style="left:15px;top:739px" width="18" height="18"><path d="M0.5 2.6L7.4 1.6V8.2H0.5Z M8.3 1.5L17.5 0.2V8.2H8.3Z M0.5 9.1H7.4V15.8L0.5 14.8Z M8.3 9.1H17.5V17.4L8.3 16Z" fill="#fff"/></svg>
<div class="a" style="left:48px;top:728px;width:344px;height:40px;background:#f2f2f2;border-top:1px solid #c9c9c9"></div>
<svg class="a" style="left:60px;top:740px" width="17" height="17"><circle cx="10.5" cy="6.5" r="5.3" fill="none" stroke="#111" stroke-width="1.3"/><path d="M6.6 10.4L0.8 16.2" stroke="#111" stroke-width="1.4"/></svg>
<div class="a t" style="left:88px;top:740px;font-size:14.5px;color:#1a1a1a">Type here to search</div>
<svg class="a" style="left:408px;top:740px" width="16" height="16"><circle cx="8" cy="8" r="6.6" fill="none" stroke="#fff" stroke-width="1.9"/></svg>
<svg class="a" style="left:455px;top:740px" width="18" height="16"><path d="M0.5 0.8H12M0.5 15.2H12" stroke="#fff" stroke-width="1.1"/><rect x="1.5" y="3.5" width="9.5" height="9" fill="none" stroke="#fff" stroke-width="1.5"/><path d="M15.5 0.5V2.5M15.5 5V15.5" stroke="#fff" stroke-width="1.5"/><rect x="13.5" y="3" width="4" height="3" fill="#fff"/></svg>
<svg class="a" style="left:503px;top:738px" width="23" height="19"><path d="M0.5 2Q0.5 0.5 2 0.5H8L10 2.5H21Q22.5 2.5 22.5 4V17.5Q22.5 18.5 21.5 18.5H1.5Q0.5 18.5 0.5 17.5Z" fill="#f8c93e"/><path d="M0.5 6H22.5V17.5Q22.5 18.5 21.5 18.5H1.5Q0.5 18.5 0.5 17.5Z" fill="#fcd764"/><path d="M5.5 18.5V12.5H17.5V18.5H14.5V15H8.5V18.5Z" fill="#2d86d8"/></svg>
<svg class="a" style="left:552px;top:736px" width="24" height="23"><path d="M8 6V4A4 4 0 0 1 16 4V6" fill="none" stroke="#fff" stroke-width="1.6"/><rect x="0.5" y="6" width="23" height="16.5" rx="1" fill="#fff"/><rect x="7" y="10" width="4.5" height="4.5" fill="#f25022"/><rect x="12.5" y="10" width="4.5" height="4.5" fill="#7fba00"/><rect x="7" y="15.5" width="4.5" height="4.5" fill="#00a4ef"/><rect x="12.5" y="15.5" width="4.5" height="4.5" fill="#ffb900"/></svg>
<div class="a" style="left:589px;top:728px;width:48px;height:40px;background:#4d5c66"></div>
<div class="a" style="left:589px;top:766px;width:48px;height:2px;background:#7bbcef"></div>
<svg class="a" style="left:601px;top:736px" width="24" height="24"><circle cx="11" cy="11" r="10.5" fill="#db4437"/><path d="M11 11L1.9 16.25A10.5 10.5 0 0 0 11 21.5Z" fill="#0f9d58"/><path d="M11 11L1.9 16.25A10.5 10.5 0 0 1 1.9 5.75L11 11Z" fill="#0f9d58"/><path d="M11 11H21.5A10.5 10.5 0 0 1 11 21.5Z" fill="#f4b400"/><circle cx="11" cy="11" r="4.8" fill="#fff"/><circle cx="11" cy="11" r="3.8" fill="#4285f4"/><circle cx="16.5" cy="16.5" r="7" fill="#3a2c1a"/><circle cx="16.5" cy="17" r="3.5" fill="#c89a6a"/></svg>
<svg class="a" style="left:650px;top:737px" width="24" height="22"><rect x="8" y="2" width="15.5" height="18" fill="#fff" stroke="#2b579a" stroke-width="1"/><path d="M11 6H21M11 9H21M11 12H21M11 15H21" stroke="#2b579a" stroke-width="1"/><path d="M0.5 2.5L13 0.5V21.5L0.5 19.5Z" fill="#2b579a"/><text x="6.5" y="15" font-family="Liberation Sans" font-weight="bold" font-size="9" fill="#fff" text-anchor="middle">W</text></svg>
<svg class="a" style="left:698px;top:736px" width="36" height="30"><path d="M1 9L13 1.5L25 9V22.5H1Z" fill="#1a84d9"/><path d="M1 9L13 17L25 9V22.5H1Z" fill="#35aef0"/><path d="M3 9L13 4L23 9L13 15Z" fill="#fff"/><circle cx="26" cy="19" r="8.5" fill="#2c3135" stroke="#9aa0a6" stroke-width="1"/><text x="26" y="23.5" font-family="Liberation Sans" font-size="12" fill="#fff" text-anchor="middle">9</text></svg>
<svg class="a" style="left:748px;top:737px" width="24" height="21"><rect x="9" y="3" width="14.5" height="15" fill="#fff" stroke="#1e7145" stroke-width="1"/><path d="M12 6.5H21M12 9.5H21M12 12.5H21M12 15.5H21M16 4V17" stroke="#1e7145" stroke-width="0.9"/><path d="M0.5 2.5L13 0.5V20.5L0.5 18.5Z" fill="#1e7145"/><text x="6.5" y="14" font-family="Liberation Sans" font-weight="bold" font-size="9" fill="#fff" text-anchor="middle">X</text></svg>
<svg class="a" style="left:797px;top:738px" width="25" height="21"><ellipse cx="11" cy="8" rx="10.5" ry="6.5" transform="rotate(-20 11 8)" fill="#e8e3e3" stroke="#d9443a" stroke-width="1.2"/><path d="M1.5 10Q6 14 14 11" fill="#8c8c8c" stroke="#8c8c8c" stroke-width="2"/><path d="M10 2L14 12M15 2L13 12" stroke="#555" stroke-width="1"/><circle cx="12" cy="17" r="2.5" fill="none" stroke="#1c8fd8" stroke-width="1.5"/><circle cx="19" cy="15.5" r="2.5" fill="none" stroke="#1c8fd8" stroke-width="1.5"/></svg>
<svg class="a" style="left:846px;top:736px" width="25" height="24"><circle cx="19" cy="6.5" r="3" fill="#7b83eb"/><circle cx="12.5" cy="4.5" r="4" fill="#7b83eb"/><path d="M9 9.5H22Q24 9.5 24 11.5V17Q24 23 18 23Q12 23 11 17Z" fill="#5059c9"/><rect x="0.5" y="7.5" width="13" height="12.5" rx="1" fill="#4b53bc"/><path d="M3.5 10.5H10.5M7 10.5V17.5" stroke="#fff" stroke-width="2"/></svg>
<svg class="a" style="left:895px;top:736px" width="24" height="24"><path d="M21.5 13.2H7.2Q7.5 18.5 13.5 18.8Q17.5 19 21 17V21.6Q17.5 23.3 13 23.2Q3 22.8 2.2 13.5Q1.8 7 6 4.5Q3.5 8 4.2 10Q6.5 6.6 11.5 6.5Q16.5 6.6 16.4 10H7.6Q8.5 5.5 12.5 5.5Q16.5 5.6 16.8 9.5" fill="none"/><path d="M12.2 0.8C18.5 0.8 22 5 21.8 11.2V13.4H7.3Q7.6 18.6 13.4 18.8Q17.3 18.9 21 16.9V21.5Q17.6 23.3 12.9 23.2Q4.5 23 2.4 15.2Q0.8 8.5 5.5 4.3Q3.8 7.4 4.3 9.3Q6.5 5.2 11.6 5.3Q16 5.5 16.5 9.4H7.8Q9 7 11.8 7Q14.8 7 16.5 9.4Q16.2 4.6 11.2 4.4Q4.8 4.6 1.2 11.5Q2 1 12.2 0.8Z" fill="#1f8ddf"/></svg>
<svg class="a" style="left:1134px;top:744px" width="14" height="8"><path d="M1 7L7 1L13 7" fill="none" stroke="#fff" stroke-width="1.3"/></svg>
<svg class="a" style="left:1157px;top:742px" width="17" height="12"><path d="M3.5 11.5Q0.5 11.5 0.5 8.5Q0.5 5.5 3.8 5.5Q5 1 9 1Q12.5 1 13.5 4.5Q16.5 5 16.5 8Q16.5 11.5 13 11.5Z" fill="#e6e9ec"/></svg>
<svg class="a" style="left:1182px;top:744px" width="16" height="10"><rect x="0.75" y="0.75" width="13" height="8.5" fill="none" stroke="#fff" stroke-width="1.3"/><rect x="2.5" y="2.5" width="4" height="5" fill="#fff"/><rect x="14" y="3" width="1.6" height="4" fill="#fff"/></svg>
<svg class="a" style="left:1205px;top:742px" width="15" height="12"><path d="M0.5 4H3L7 0.8V11.2L3 8H0.5Z" fill="none" stroke="#fff" stroke-width="1"/><path d="M9.5 3.5L14 8.5M14 3.5L9.5 8.5" stroke="#fff" stroke-width="1.1"/></svg>
<svg class="a" style="left:1231px;top:742px" width="14" height="14"><path d="M1 12A11 11 0 0 1 12 1M3.5 12A8.5 8.5 0 0 1 12 3.5M6 12A6 6 0 0 1 12 6M8.5 12A3.5 3.5 0 0 1 12 8.5" fill="none" stroke="#fff" stroke-width="1"/><circle cx="11.5" cy="11.5" r="1.5" fill="#fff"/></svg>
<div class="a t" style="left:1248px;top:732px;width:66px;text-align:center;font-size:11.3px;color:#fff">10:13 AM</div>
<div class="a t" style="left:1248px;top:750px;width:66px;text-align:center;font-size:11.55px;color:#fff">8/18/2020</div>
<svg class="a" style="left:1324px;top:740px" width="28" height="26"><path d="M0.5 0.5H16.5V11.5H6L3 14.5V11.5H0.5Z" fill="#fff"/><path d="M3 3.5H14M3 6H14M3 8.5H14" stroke="#1c2b39" stroke-width="1"/><circle cx="17" cy="15" r="9.3" fill="#2f3438" stroke="#8e9499" stroke-width="1.2"/><text x="17" y="19.5" font-family="Liberation Sans" font-size="12" fill="#fff" text-anchor="middle">12</text></svg>
<div class="a" style="left:1361px;top:728px;width:1px;height:40px;background:#6b7680"></div>
</body></html>
